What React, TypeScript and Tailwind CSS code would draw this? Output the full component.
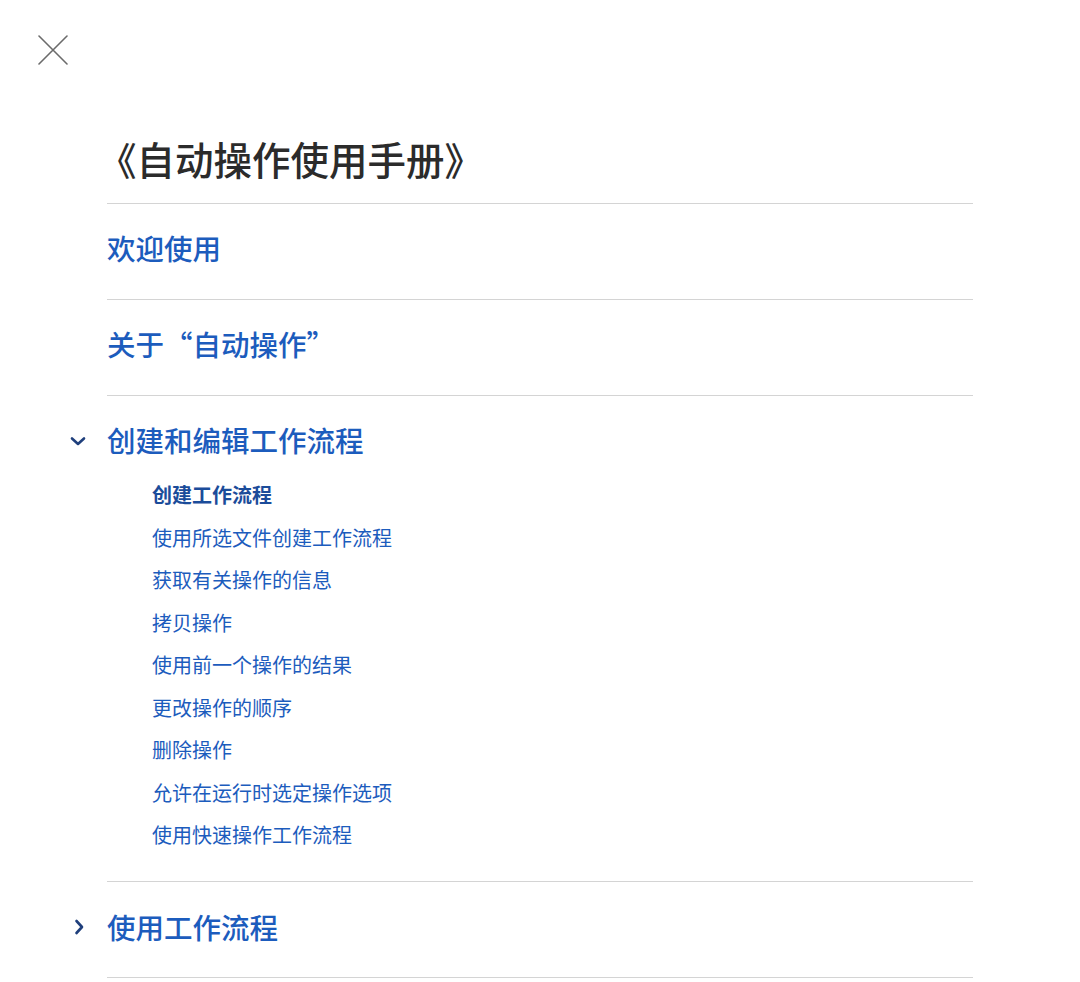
import React from 'react';

const subItems = [
  '创建工作流程',
  '使用所选文件创建工作流程',
  '获取有关操作的信息',
  '拷贝操作',
  '使用前一个操作的结果',
  '更改操作的顺序',
  '删除操作',
  '允许在运行时选定操作选项',
  '使用快速操作工作流程',
];

const ChevronDown = () => (
  <svg width="18" height="12" viewBox="0 0 18 12" fill="none" className="text-[#1f3f7c]">
    <path d="M3 3.5 L9 9 L15 3.5" stroke="currentColor" strokeWidth="2.6" strokeLinecap="round" strokeLinejoin="round" />
  </svg>
);

const ChevronRight = () => (
  <svg width="12" height="18" viewBox="0 0 12 18" fill="none" className="text-[#1f3f7c]">
    <path d="M3.5 3 L9 9 L3.5 15" stroke="currentColor" strokeWidth="2.6" strokeLinecap="round" strokeLinejoin="round" />
  </svg>
);

const App = () => {
  return (
    <div
      className="min-h-screen bg-white"
      style={{ fontFamily: '"Noto Sans CJK SC", "Noto Sans", sans-serif' }}
    >
      {/* Close */}
      <div className="pt-[35px] pl-[38px]">
        <button className="block w-[30px] h-[30px]">
          <svg width="30" height="30" viewBox="0 0 30 30" fill="none">
            <path d="M1 1 L29 29 M29 1 L1 29" stroke="#6b6b6b" strokeWidth="1.6" strokeLinecap="round" />
          </svg>
        </button>
      </div>

      <div className="ml-[107px] w-[866px] mt-[69px]">
        {/* Title */}
        <div className="pb-[21px] border-b border-[#d4d4d4]">
          <h1 className="text-[38.5px] leading-[48px] font-medium text-[#2b2b2b] -ml-[9px]">
            《自动操作使用手册》
          </h1>
        </div>

        {/* Sections */}
        <div className="border-b border-[#d4d4d4] pt-[26px] pb-[33px]">
          <a className="block text-[28.5px] leading-[36px] font-medium text-[#1c5cbd]">欢迎使用</a>
        </div>

        <div className="border-b border-[#d4d4d4] pt-[26px] pb-[33px]">
          <a className="block text-[28.5px] leading-[36px] font-medium text-[#1c5cbd]">关于“自动操作”</a>
        </div>

        <div className="border-b border-[#d4d4d4] pt-[26px] pb-[24px]">
          <div className="relative">
            <span className="absolute -left-[38px] top-[13px]">
              <ChevronDown />
            </span>
            <a className="block text-[28.5px] leading-[36px] font-medium text-[#1c5cbd]">创建和编辑工作流程</a>
          </div>
          <ul className="mt-[16px] pl-[45px]">
            {subItems.map((item, i) => (
              <li
                key={i}
                className={
                  i === 0
                    ? 'text-[20px] leading-[42.5px] font-bold text-[#1b4c9a]'
                    : 'text-[20px] leading-[42.5px] text-[#1c5cbd]'
                }
              >
                {item}
              </li>
            ))}
          </ul>
        </div>

        <div className="border-b border-[#d4d4d4] pt-[27px] pb-[32px]">
          <div className="relative">
            <span className="absolute -left-[34px] top-[9px]">
              <ChevronRight />
            </span>
            <a className="block text-[28.5px] leading-[36px] font-medium text-[#1c5cbd]">使用工作流程</a>
          </div>
        </div>
      </div>
    </div>
  );
};

export default App;
